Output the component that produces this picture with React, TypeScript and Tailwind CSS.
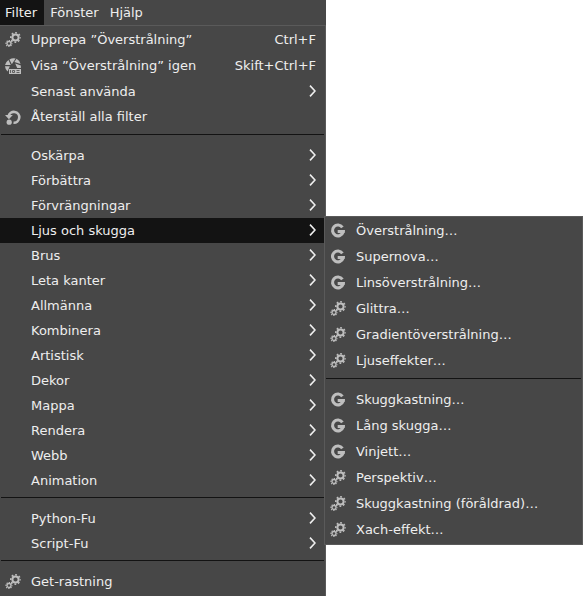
import React from "react";

type IconName = "gears" | "reshow" | "reset" | "gegl";

type Entry =
  | { kind: "separator" }
  | {
      kind: "item";
      label: string;
      icon?: IconName;
      shortcut?: string;
      arrow?: boolean;
      tall?: boolean;
      open?: boolean;
    };

const sep: Entry = { kind: "separator" };
const item = (label: string, icon?: IconName, shortcut?: string): Entry => ({
  kind: "item",
  label,
  icon,
  shortcut,
  tall: true,
});
const sub = (label: string, open = false): Entry => ({ kind: "item", label, arrow: true, open });

const filterMenu: Entry[] = [
  item("Upprepa ”Överstrålning”", "gears", "Ctrl+F"),
  item("Visa ”Överstrålning” igen", "reshow", "Skift+Ctrl+F"),
  sub("Senast använda"),
  item("Återställ alla filter", "reset"),
  sep,
  sub("Oskärpa"),
  sub("Förbättra"),
  sub("Förvrängningar"),
  sub("Ljus och skugga", true),
  sub("Brus"),
  sub("Leta kanter"),
  sub("Allmänna"),
  sub("Kombinera"),
  sub("Artistisk"),
  sub("Dekor"),
  sub("Mappa"),
  sub("Rendera"),
  sub("Webb"),
  sub("Animation"),
  sep,
  sub("Python-Fu"),
  sub("Script-Fu"),
  sep,
  item("Get-rastning", "gears"),
];

const lightMenu: Entry[] = [
  item("Överstrålning…", "gegl"),
  item("Supernova…", "gegl"),
  item("Linsöverstrålning…", "gegl"),
  item("Glittra…", "gears"),
  item("Gradientöverstrålning…", "gears"),
  item("Ljuseffekter…", "gears"),
  sep,
  item("Skuggkastning…", "gegl"),
  item("Lång skugga…", "gegl"),
  item("Vinjett…", "gegl"),
  item("Perspektiv…", "gears"),
  item("Skuggkastning (föråldrad)…", "gears"),
  item("Xach-effekt…", "gears"),
];

function Icon({ name }: { name?: IconName }) {
  return (
    <svg
      aria-hidden="true"
      viewBox="0 0 16 16"
      className="size-4 shrink-0 text-[#bebebe]"
      fill="none"
      stroke="currentColor"
    >
      {name === "gears" && (
        <>
          <circle cx="10.5" cy="5.5" r="3.1" strokeWidth="2" />
          <circle cx="10.5" cy="5.5" r="4.7" strokeWidth="1.6" strokeDasharray="1.8 1.891" strokeDashoffset="0.9" />
          <circle cx="4" cy="11.5" r="2" strokeWidth="1.3" />
          <circle cx="4" cy="11.5" r="3" strokeWidth="1.2" strokeDasharray="1.2 1.156" strokeDashoffset="0.6" />
        </>
      )}
      {name === "gegl" && (
        <>
          <path d="M12.4 4.4A5.4 5.4 0 1 0 13.1 9" strokeWidth="3.1" />
          <path d="M7.7 7H15Q15.1 8.5 14.6 10H7.7Z" fill="currentColor" stroke="none" />
        </>
      )}
      {name === "reshow" && (
        <>
          <g fill="currentColor" stroke="none">
            <path d="M4.4 1.4Q7.4 -.4 10.6.4L6.8 6.2Z" />
            <path d="M11.6.8Q14.6 2.4 15.6 6L9.4 4Z" />
            <path d="M3.5 2L5.8 7H0Q.6 4 3.5 2Z" />
            <path d="M0 8.2H4.8L2.6 13.6Q.2 11.4 0 8.2Z" />
            <path d="M10.2 5.6L15.8 7.4V10H12.2Z" />
            <path d="M4 11H16V16H4Z" />
          </g>
          <path
            d="M5.5 12V15M7.5 12.5H9.5V14.5H7.500ZM11.500 12.500H14.500M11.500 14.500H14.500"
            stroke="#555555"
            strokeWidth="0.9"
          />
        </>
      )}
      {name === "reset" && (
        <>
          <path d="M3.600 7.200A5.400 5.400 0 1 1 8.500 13.700" strokeWidth="2.600" />
          <path d="M0 6H7.800L3.900 10.200Z" fill="currentColor" stroke="none" />
          <circle cx="4.200" cy="13.200" r="2.600" fill="currentColor" stroke="none" />
        </>
      )}
    </svg>
  );
}

function Chevron() {
  return (
    <svg aria-hidden="true" viewBox="0 0 7 12" className="mb-px h-3 w-[7px] shrink-0" fill="none" stroke="#eeeeee" strokeWidth="1.6">
      <path d="M1 0.600L6 6L1 11.400" />
    </svg>
  );
}

function Menu({ entries, label, children }: { entries: Entry[]; label: string; children?: React.ReactNode }) {
  return (
    <ul role="menu" aria-label={label} className="py-px">
      {entries.map((entry, i) =>
        entry.kind === "separator" ? (
          <li key={i} role="separator" className="mx-px mt-1 mb-2 h-px bg-[#131313]" />
        ) : (
          <li key={i} role="none" className="relative">
            <button
              type="button"
              role="menuitem"
              aria-haspopup={entry.arrow ? "menu" : undefined}
              aria-expanded={entry.arrow ? !!entry.open : undefined}
              className={`flex w-full items-center gap-[10px] pr-[9px] pl-[5px] text-left whitespace-nowrap ${
                entry.tall ? "h-[26px] pb-px" : "h-[25px]"
              } ${entry.open ? "bg-[#131313]" : "hover:bg-[#131313]"}`}
            >
              <Icon name={entry.icon} />
              <span className="flex-1">{entry.label}</span>
              {entry.shortcut && <span>{entry.shortcut}</span>}
              {entry.arrow && <Chevron />}
            </button>
            {entry.open && children}
          </li>
        ),
      )}
    </ul>
  );
}

export default function App() {
  return (
    <div className="min-h-screen bg-white font-['DejaVu_Sans',sans-serif] text-[13px] leading-4 text-[#eeeeee]">
      <div className="min-h-screen w-[326px] bg-[#474747]">
        <nav aria-label="Menyrad" className="flex h-[25px]">
          <button type="button" className="bg-[#131313] pr-[7px] pl-[5px]">Filter</button>
          <button type="button" className="px-[6px]">Fönster</button>
          <button type="button" className="px-[5px]">Hjälp</button>
        </nav>
        <div className="min-h-[571px] border-t border-r border-[#5a5a5a]">
          <Menu entries={filterMenu} label="Filter">
            <div className="absolute -top-[2px] left-full z-10 -ml-px w-[259px] border border-[#5a5a5a] bg-[#474747]">
              <Menu entries={lightMenu} label="Ljus och skugga" />
            </div>
          </Menu>
        </div>
      </div>
    </div>
  );
}
